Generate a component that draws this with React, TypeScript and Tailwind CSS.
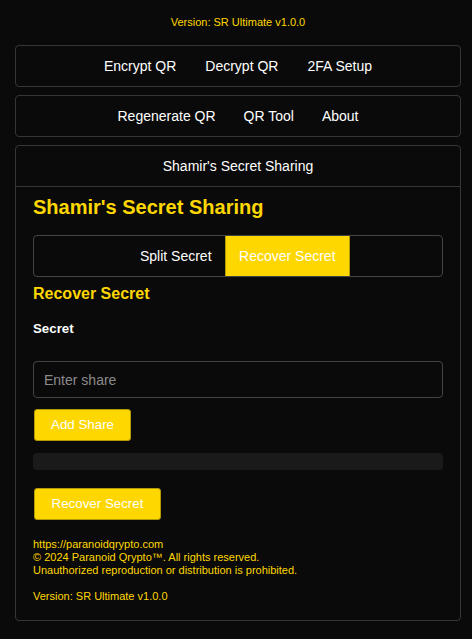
import React from "react";

const font = { fontFamily: '"Liberation Sans", Arial, sans-serif' };

export default function App() {
  return (
    <div className="min-h-[639px] w-full bg-[#0a0a0a] pl-[15px] pr-[11px] pt-[16px] pb-[19px] text-white" style={font}>
      <div className="text-center text-[11px] leading-[13px] text-[#ffd700]">Version: SR Ultimate v1.0.0</div>

      <nav className="mt-[16px] flex h-[42px] items-center justify-center rounded-[4px] border border-[#363636]">
        {["Encrypt QR", "Decrypt QR", "2FA Setup"].map((t) => (
          <button key={t} className="h-[40px] px-[14.5px] text-[14px] text-white">{t}</button>
        ))}
      </nav>

      <nav className="mt-[8px] flex h-[42px] items-center justify-center rounded-[4px] border border-[#363636]">
        {["Regenerate QR", "QR Tool", "About"].map((t) => (
          <button key={t} className="h-[40px] px-[14px] text-[14px] text-white">{t}</button>
        ))}
      </nav>

      <div className="mt-[8px] rounded-[4px] border border-[#363636]">
        <div className="flex h-[41px] items-center justify-center border-b border-[#363636] text-[14px] text-white">
          Shamir's Secret Sharing
        </div>
        <div className="px-[17px] pt-[9px] pb-[17px]">
          <h2 className="text-[20px] font-bold leading-[23px] text-[#ffd700]">Shamir's Secret Sharing</h2>

          <div className="mt-[16px] flex h-[42px] justify-center rounded-[4px] border border-[#444444]">
            <button className="h-[40px] px-[13.5px] text-[14px] text-white">Split Secret</button>
            <button className="h-[40px] border-x border-[#b39a00] bg-[#ffd700] px-[13px] text-[14px] text-white">Recover Secret</button>
          </div>

          <h3 className="mt-[8px] text-[16px] font-bold leading-[18px] text-[#ffd700]">Recover Secret</h3>

          <div className="mt-[18px] text-[13.3px] font-bold leading-[15px] text-white">Secret</div>

          <input
            className="mt-[25px] block h-[37px] w-full rounded-[4px] border border-[#444444] bg-[#0a0a0a] px-[10px] text-[14px] text-white outline-none placeholder:text-[#8a8a8a]"
            placeholder="Enter share"
            style={font}
          />

          <button className="ml-[1px] mt-[11px] block h-[32px] w-[97px] rounded-[3px] border border-[#b39a00] bg-[#ffd700] text-[13.33px] text-white" style={font}>
            Add Share
          </button>

          <div className="mt-[12px] h-[17px] w-full rounded-[4px] bg-[#1a1a1a]" />

          <button className="ml-[1px] mt-[18px] block h-[32px] w-[127px] rounded-[3px] border border-[#b39a00] bg-[#ffd700] text-[13.33px] text-white" style={font}>
            Recover Secret
          </button>

          <div className="mt-[18px] text-[11px] leading-[13px] text-[#ffd700]">
            <div>https://paranoidqrypto.com</div>
            <div>© 2024 Paranoid Qrypto™. All rights reserved.</div>
            <div>Unauthorized reproduction or distribution is prohibited.</div>
            <div className="h-[13px]" />
            <div>Version: SR Ultimate v1.0.0</div>
          </div>
        </div>
      </div>
    </div>
  );
}
